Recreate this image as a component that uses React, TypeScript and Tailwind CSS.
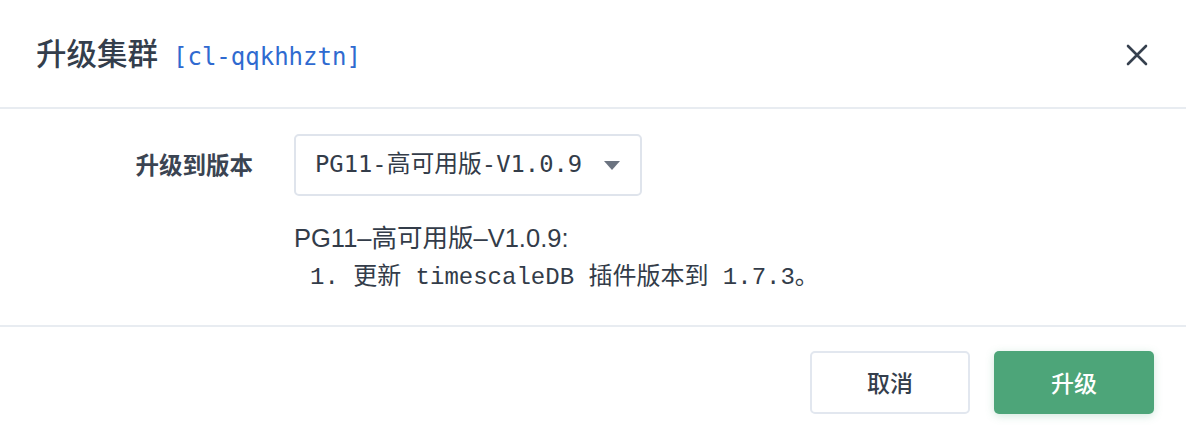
import React from "react";

export default function App() {
  const cjk = { fontFamily: '"Noto Sans CJK SC", sans-serif' };
  return (
    <div className="w-[1186px] h-[434px] bg-white flex flex-col overflow-hidden">
      <div className="h-[109px] shrink-0 flex items-center pl-[36px] pr-[38px] pb-[2px] border-b-2 border-[#e8ecf1]">
        <div className="flex items-baseline">
          <span className="text-[30.5px] font-medium text-[#343e4c]" style={cjk}>升级集群</span>
          <span className="ml-[15px] text-[24px] text-[#2f6ad0]" style={{ fontFamily: '"DejaVu Sans Mono", monospace' }}>[cl-qqkhhztn]</span>
        </div>
        <div className="flex-1" />
        <svg width="22" height="22" viewBox="0 0 22 22" className="mt-[4px]">
          <path d="M2 2 L20 20 M20 2 L2 20" stroke="#36404e" strokeWidth="2.6" strokeLinecap="round" />
        </svg>
      </div>
      <div className="h-[218px] shrink-0 border-b-2 border-[#e8ecf1] flex">
        <div className="w-[294px]" />
        <div className="flex flex-col">
          <div className="h-[25px]" />
          <div className="flex items-center relative">
            <span className="absolute right-[100%] mr-[41px] whitespace-nowrap text-[23.5px] font-semibold text-[#3b4452]" style={cjk}>升级到版本</span>
            <div className="w-[348px] h-[62px] border-2 border-[#dfe4ec] rounded-[5px] flex items-center pl-[19px] pr-[20px]">
              <span className="text-[23.8px] text-[#333c49] whitespace-nowrap" style={{ fontFamily: '"DejaVu Sans Mono", "Noto Sans CJK SC", monospace' }}>PG11-高可用版-V1.0.9</span>
              <div className="flex-1" />
              <svg width="16" height="9" viewBox="0 0 16 9">
                <path d="M0 0 L16 0 L8 9 Z" fill="#6b7380" />
              </svg>
            </div>
          </div>
          <div className="pt-[23px] leading-[39px] text-[#333c49]">
            <div className="text-[25.5px] whitespace-nowrap" style={{ fontFamily: '"Liberation Sans", "Noto Sans CJK SC", sans-serif' }}>PG11–高可用版–V1.0.9:</div>
            <div className="pl-[16px] text-[24px] whitespace-pre" style={{ fontFamily: '"Liberation Mono", "Noto Sans CJK SC", monospace' }}>1. 更新 timescaleDB 插件版本到 1.7.3。</div>
          </div>
        </div>
      </div>
      <div className="flex-1 flex justify-end items-start pt-[24px] pr-[32px] gap-[24px]">
        <button className="w-[160px] h-[63px] border-2 border-[#e2e7ef] rounded-[5px] bg-white text-[23px] font-medium text-[#343e4c]" style={cjk}>取消</button>
        <button className="w-[160px] h-[63px] rounded-[5px] bg-[#4da579] text-[23px] font-medium text-white shadow-[0_2px_8px_rgba(77,165,121,0.25)]" style={cjk}>升级</button>
      </div>
    </div>
  );
}
